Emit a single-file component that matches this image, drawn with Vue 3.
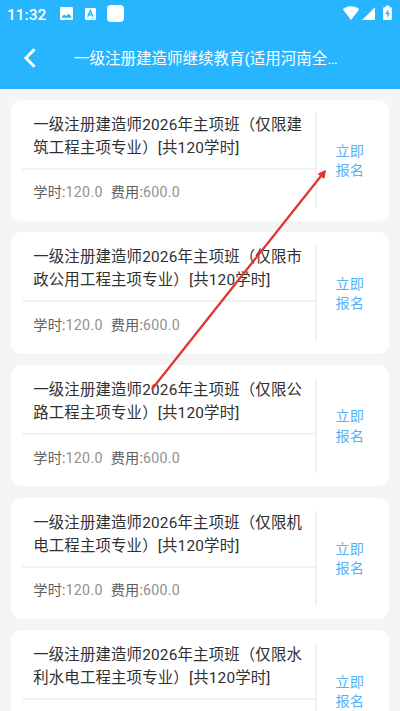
<script setup>
const courses = [
  { lines: ['一级注册建造师2026年主项班（仅限建', '筑工程主项专业）[共120学时]'], details: true },
  { lines: ['一级注册建造师2026年主项班（仅限市', '政公用工程主项专业）[共120学时]'], details: true },
  { lines: ['一级注册建造师2026年主项班（仅限公', '路工程主项专业）[共120学时]'], details: true },
  { lines: ['一级注册建造师2026年主项班（仅限机', '电工程主项专业）[共120学时]'], details: true },
  { lines: ['一级注册建造师2026年主项班（仅限水', '利水电工程主项专业）[共120学时]'], details: false },
]
</script>

<template>
  <div class="screen">
    <header class="top">
      <div class="status">
        <span class="clock">11:32</span>
        <svg class="picture" width="13" height="13" viewBox="0 0 13 13">
          <rect width="13" height="13" rx="1.3" fill="#fff" />
          <path d="M2 10.8V9.300L4.300 7.500 6 9 8.600 6.800 11.200 9.300V10.800Z" fill="#27b5ff" />
        </svg>
        <svg class="letter" width="11" height="12" viewBox="0 0 11 12">
          <rect width="11" height="12" rx="1.2" fill="#fff" />
          <path d="M2.7 8.8 5.3 2.500 7.900 8.800M3.700 6.800H7" fill="none" stroke="#27b5ff" stroke-width="1.400" />
          <path d="M6 10.500H10" stroke="#9edcfb" />
        </svg>
        <span class="blank"></span>
        <svg class="signals" width="51" height="17" viewBox="0 0 51 17">
          <path d="M.8 4.200C5.200.2 12.800.2 17.200 4.200L9 15Z" fill="#fff" />
          <path d="M20.200 15H33V2.200Z" fill="#fff" />
          <path d="M43.700.5h3.600v1.700h1.500q1 0 1 1V14q0 1-1 1h-6.700q-1 0-1-1V3.200q0-1 1-1h1.600Z" fill="#fff" />
          <path d="M46.300 4.200 43.300 9h1.900v4L47.900 8h-1.600Z" fill="#27b5ff" />
        </svg>
      </div>
      <div class="nav">
        <svg class="back" width="14" height="22" viewBox="0 0 14 22">
          <path d="M11.500 2.200 3 11 11.500 19.800" fill="none" stroke="#fff" stroke-width="3" />
        </svg>
        <h1>一级注册建造师继续教育(适用河南全…</h1>
      </div>
    </header>
    <main class="list">
      <article v-for="(course, i) in courses" :key="i" class="card">
        <div class="info">
          <h2><span v-for="line in course.lines" :key="line">{{ line }}</span></h2>
          <p v-if="course.details">学时:<em>120.0</em><span class="fee">费用:</span><em>600.0</em></p>
        </div>
        <a class="apply"><span>立即</span><span>报名</span></a>
      </article>
    </main>
    <svg class="arrow" width="400" height="711" viewBox="0 0 400 711">
      <path d="M152.500 388.500 321 176" stroke="#e3342f" stroke-width="2.300" stroke-linecap="round" />
      <path d="M325.500 170.500 324 178.300 318.200 174Z" fill="#e3342f" stroke="#e3342f" stroke-linejoin="round" />
    </svg>
  </div>
</template>

<style>
body { margin: 0; overflow: hidden; }
</style>

<style scoped>
.screen {
  position: relative;
  width: 400px;
  height: 711px;
  overflow: hidden;
  background: #f5f5f5;
  font-family: Roboto, "Noto Sans CJK SC", sans-serif;
  color: #303030;
}
.top { height: 89px; background: #27b5ff; color: #fff; }
.status { display: flex; align-items: center; height: 27px; padding: 0 7px; }
.clock { width: 53px; padding-top: 2px; font-size: 15.500px; font-weight: 500; line-height: 26px; }
.picture { margin-right: 12px; }
.letter { margin-right: 11px; }
.blank { width: 17px; height: 17px; border-radius: 4px; background: #fff; }
.signals { margin-left: auto; }
.nav { display: flex; align-items: center; height: 62px; padding-left: 23px; box-sizing: border-box; }
.nav h1 { margin: 2px 0 0 37px; font-size: 15.500px; font-weight: 400; line-height: 25px; white-space: nowrap; }
.list { display: flex; flex-direction: column; gap: 11.350px; padding: 10.700px 11px 0; }
.card {
  display: flex;
  flex: none;
  box-sizing: border-box;
  height: 121.350px;
  padding: 13.500px 0 13px 11px;
  border-radius: 11.500px;
  background: #fff;
}
.info { box-sizing: border-box; width: 295px; border-right: 2px solid #f1f1f1; }
h2 {
  height: 56.500px;
  box-sizing: border-box;
  margin: 0;
  padding: .5px 0 0 11.200px;
  border-bottom: 2px solid #f2f2f2;
  font-size: 15.400px;
  font-weight: 400;
  letter-spacing: .18px;
  line-height: 23px;
}
h2 span { display: block; white-space: nowrap; }
p { margin: 0; padding: 11.500px 0 0 11.300px; font-size: 14.200px; letter-spacing: .15px; line-height: 22px; color: #606060; white-space: nowrap; }
em { font-style: normal; letter-spacing: .3px; color: #919191; }
.fee { margin-left: 8px; }
.apply {
  display: flex;
  flex: 1;
  flex-direction: column;
  align-items: center;
  justify-content: center;
  padding: 1.600px 6.500px 0 0;
  font-size: 14.200px;
  line-height: 19.600px;
  color: #55b1f8;
}
.arrow { position: absolute; top: 0; left: 0; pointer-events: none; }
</style>
